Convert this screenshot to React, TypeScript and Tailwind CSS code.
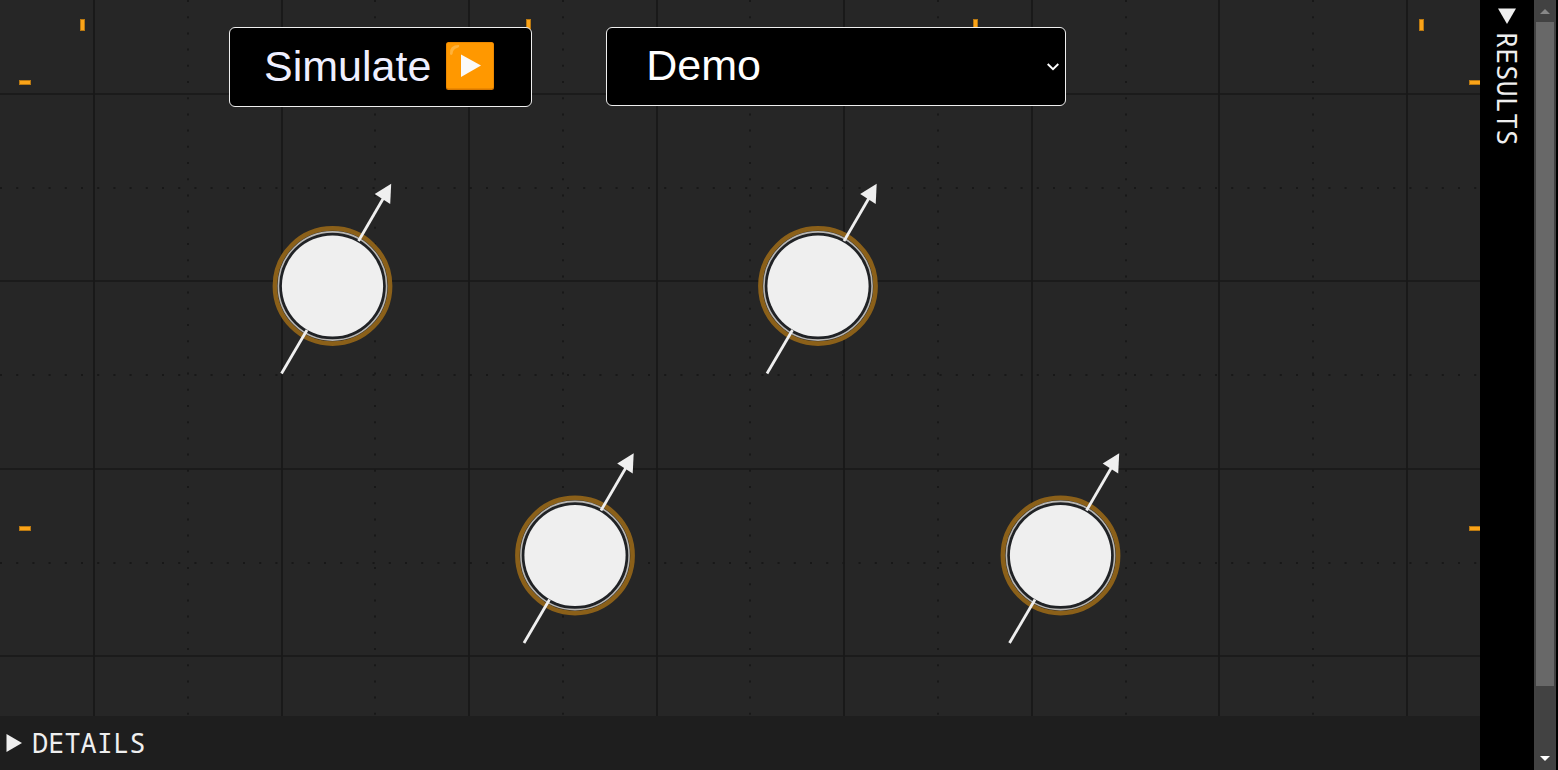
import React from "react";

const majorX = [94, 282, 469, 657, 844, 1032, 1219, 1407];
const majorY = [94, 281, 469, 656];
const minorX = [188, 375, 563, 750, 938, 1126, 1313];
const minorY = [188, 375, 563];
const topTicks = [82, 528, 975, 1421];
const sideTicks = [82, 528];
const spins = [
  { x: 332.5, y: 286 },
  { x: 818, y: 286 },
  { x: 575, y: 555.5 },
  { x: 1060.5, y: 555.5 },
];

function Spin({ x, y }: { x: number; y: number }) {
  return (
    <g transform={`translate(${x} ${y})`}>
      <circle r="57.6" fill="#262626" stroke="#8b6019" strokeWidth="4.6" />
      <circle r="54.1" fill="#202225" stroke="#b9b7b3" strokeWidth="1.6" />
      <circle r="50.600" fill="#efefef" />
      <g stroke="#efefef" strokeWidth="2.8">
        <path d="M-51 87.500L-25.5 44" />
        <path d="M26 -45L51 -88" />
      </g>
      <path d="M58.700 -102.300L42.200 -92L57.700 -82Z" fill="#efefef" />
    </g>
  );
}

function Grid() {
  return (
    <svg className="absolute inset-0 h-full w-full" aria-hidden="true">
      <g stroke="#181818" strokeWidth="1.7">
        {majorX.map((x) => (
          <line key={x} x1={x} x2={x} y1="0" y2="100%" />
        ))}
        {majorY.map((y) => (
          <line key={y} x1="0" x2="100%" y1={y} y2={y} />
        ))}
      </g>
      <g stroke="#181818" strokeWidth="1.8" strokeDasharray="2 14.2">
        {minorX.map((x) => (
          <line key={x} x1={x} x2={x} y1="0" y2="100%" />
        ))}
        {minorY.map((y) => (
          <line key={y} x1="0" x2="100%" y1={y} y2={y} />
        ))}
      </g>
      <g fill="#fba418" stroke="#b87812" strokeWidth="1">
        {topTicks.map((x) => (
          <rect key={x} x={x - 1.5} y="19.5" width="4" height="11" />
        ))}
        {sideTicks.map((y) => (
          <React.Fragment key={y}>
            <rect x="19.5" y={y - 1.5} width="11" height="4" />
            <rect x="1469.5" y={y - 1.5} width="11" height="4" />
          </React.Fragment>
        ))}
      </g>
      {spins.map((s) => (
        <Spin key={`${s.x}-${s.y}`} {...s} />
      ))}
    </svg>
  );
}

function PlayBadge() {
  return (
    <svg className="size-12" viewBox="0 0 48 48" aria-hidden="true">
      <rect width="48" height="48" rx="2.5" fill="#d87800" />
      <rect x="0.5" y="0.5" width="47" height="46" rx="2" fill="#ff9800" />
      <path d="M4 12Q3 3 13 3Q14 5 11 6Q7 7 6.500 12Q5 14 4 12Z" fill="#ffb23a" />
      <path d="M15 12.500L35 23.500L15 35Z" fill="#fafafa" />
    </svg>
  );
}

function Toolbar() {
  return (
    <div className="absolute inset-x-0 top-0 flex items-start gap-[74px] pt-[27px] pl-[229px] font-['Liberation_Sans',Arial,sans-serif] text-[43px] leading-[50px]">
      <button
        type="button"
        className="flex h-20 items-center gap-[15px] rounded-md border border-[#efefef] bg-black pr-[37px] pb-[2px] pl-[34px] text-[#efefff]"
      >
        Simulate
        <PlayBadge />
      </button>
      <div className="relative">
        <select
          aria-label="Design"
          defaultValue="Demo"
          className="h-[79px] w-[460px] appearance-none rounded-md border border-[#efefef] bg-black px-[39px] pb-[3px] text-white"
        >
          <option>Demo</option>
        </select>
        <svg
          className="pointer-events-none absolute top-9 right-[7px] h-2 w-3"
          viewBox="0 0 12 8"
          fill="none"
          stroke="#fff"
          strokeWidth="1.9"
          aria-hidden="true"
        >
          <path d="M0.700 1L6 6.200L11.300 1" />
        </svg>
      </div>
    </div>
  );
}

function Scrollbar() {
  return (
    <div className="flex w-6 shrink-0 flex-col border-r-2 border-black bg-[#424242]" aria-hidden="true">
      <svg className="h-[22px] w-[22px] shrink-0" viewBox="0 0 22 22">
        <path d="M6 14L11 9L16 14Z" fill="#878787" />
      </svg>
      <div className="min-h-0 flex-1">
        <div className="mx-0.5 h-[91.5%] bg-[#686868]" />
      </div>
      <svg className="h-[22px] w-[22px] shrink-0" viewBox="0 0 22 22">
        <path d="M6 8L16 8L11 13Z" fill="#fff" />
      </svg>
    </div>
  );
}

export default function App() {
  return (
    <div className="flex h-screen overflow-hidden bg-black font-['Noto_Sans_Mono','DejaVu_Sans_Mono',monospace] text-[27px] leading-[54px] text-[#efefef]">
      <div className="flex min-w-0 flex-1 flex-col">
        <main className="relative min-h-0 flex-1 overflow-hidden bg-[#262626]">
          <Grid />
          <Toolbar />
        </main>
        <button type="button" className="flex shrink-0 items-center gap-[10px] bg-[#1e1e1e] pl-[6px]">
          <svg className="h-[18px] w-4" viewBox="0 0 16 18" aria-hidden="true">
            <path d="M0.500 0V18L16 9Z" fill="#efefef" />
          </svg>
          DETAILS
        </button>
      </div>
      <button
        type="button"
        className="flex w-[54px] shrink-0 flex-col items-center bg-black pt-2 pr-px"
      >
        <svg className="h-4 w-[18px] shrink-0" viewBox="0 0 18 16" aria-hidden="true">
          <path d="M0 0.500H18L9 16Z" fill="#efefef" />
        </svg>
        <span className="mt-2 [writing-mode:vertical-rl]">RESULTS</span>
      </button>
      <Scrollbar />
    </div>
  );
}
